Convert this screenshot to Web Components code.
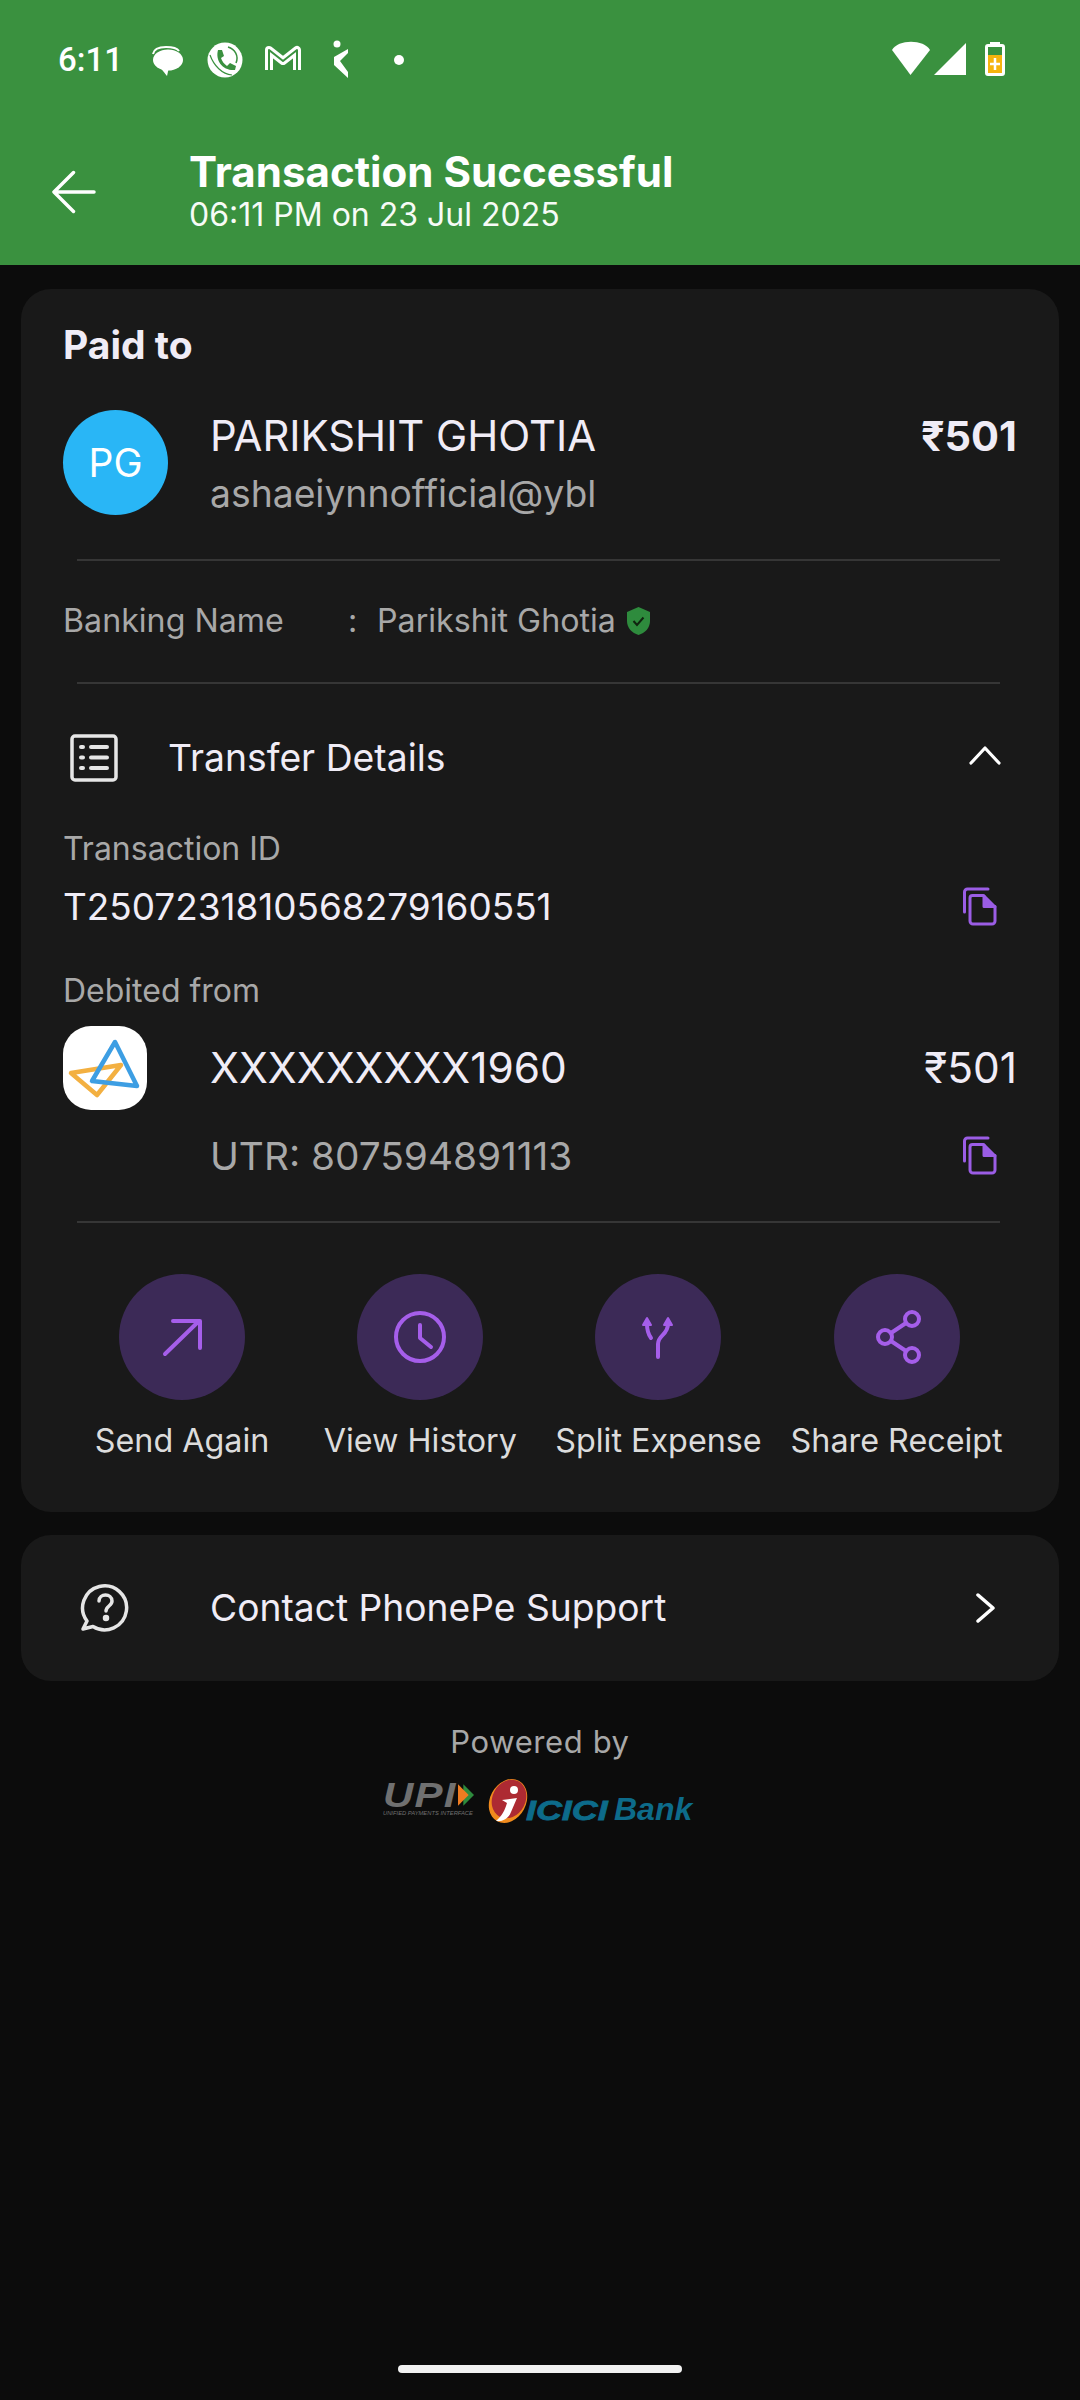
<!DOCTYPE html>
<html>
<head>
<meta charset="utf-8">
<title>Transaction Successful</title>
<style>
    html, body { margin: 0; padding: 0; background: #0c0c0c; }
    body { font-family: "Inter", "Liberation Sans", sans-serif; color: #f0ecf6; }
</style>
</head>
<body>
<txn-page>
    <txn-header slot="header" title="Transaction Successful" subtitle="06:11 PM on 23 Jul 2025"></txn-header>

    <txn-card>
        <paid-to name="PARIKSHIT GHOTIA" vpa="ashaeiynnofficial@ybl" amount="₹501" initials="PG" banking="Parikshit Ghotia"></paid-to>
        <transfer-details txn="T2507231810568279160551" account="XXXXXXXXX1960" amount="₹501" utr="UTR: 807594891113"></transfer-details>
        <action-row></action-row>
    </txn-card>

    <support-link>Contact PhonePe Support</support-link>
    <powered-by></powered-by>
</txn-page>

<script>
const copyIcon = `<svg width="36" height="40" viewBox="0 0 36 40" fill="none" stroke="#9b5de5" stroke-width="3" stroke-linejoin="round" stroke-linecap="round">
    <path d="M2.5 25V5a3 3 0 0 1 3-3H26"/>
    <path d="M10.5 8.5H21.5L33 20V34a3 3 0 0 1-3 3H11a3 3 0 0 1-3-3V11a2.500 2.500 0 0 1 2.500-2.500Z"/>
    <path d="M22 9V19.500H33" fill="#9b5de5"/>
</svg>`;

const actionIcons = {
    send: `<path d="M13 47L47 14M21 14H48V41"/>`,
    history: `<circle cx="30" cy="30" r="24"/><path d="M30 18V31L41 40"/>`,
    split: `<path d="M30 50V37C30 28 40 28 40 17M23 31C20 27 19 24 19 17"/>
            <path d="M19 11L15 18H23ZM40 11L36 18H44Z" fill="#a55eea" stroke-width="2"/>`,
    share: `<circle cx="45" cy="12" r="7"/><circle cx="18" cy="30" r="7"/><circle cx="45" cy="48" r="7"/>
            <path d="M39 16L24 26M24 34L39 44"/>`
};

class TxnPage extends HTMLElement {
    connectedCallback() {
        const root = this.attachShadow({ mode: "open" });
        root.innerHTML = `
            <style>
                :host { display: flex; flex-direction: column; height: 2400px; background: #0c0c0c; overflow: hidden; }
                .body { display: flex; flex-direction: column; flex: 1; padding: 24px 21px 0; }
                .home { width: 284px; height: 8px; border-radius: 4px; background: #f2f2f2; margin: 0 auto 27px; flex: none; }
            </style>
            <slot name="header"></slot>
            <div class="body"><slot></slot></div>
            <div class="home"></div>`;
    }
}

class TxnHeader extends HTMLElement {
    connectedCallback() {
        const root = this.attachShadow({ mode: "open" });
        root.innerHTML = `
            <style>
                :host { display: block; height: 265px; background: #3a913f; color: #fff; }
                .status { display: flex; align-items: center; height: 120px; padding: 0 50px 0 58px; }
                .time { width: 72px; font: 500 33px/40px "Roboto", sans-serif; letter-spacing: 0; }
                .status .right { margin-left: auto; }
                svg { display: block; flex: none; }
                .bar { display: flex; align-items: flex-start; height: 145px; }
                .back { margin: 50px 0 0 52px; }
                .titles { margin-left: 93px; padding-top: 28px; }
                .title { font: 700 42.100px/48px "Inter", sans-serif; }
                .sub { font: 400 32px/40px "Inter", sans-serif; margin-top: -1px; color: #f6fbf6; }
            </style>
            <div class="status">
                <div class="time">6:11</div>
                <svg width="300" height="80" viewBox="0 0 300 80">
                    <ellipse cx="38" cy="40" rx="15" ry="10.500" fill="#fff"/>
                    <path d="M29 46 L37 56 L39 47Z" fill="#fff"/>
                    <path d="M23 34 C24 28 30 27 36 27 C42 27 47 28 49 31" fill="none" stroke="#fff" stroke-width="2"/>
                    <circle cx="95" cy="40" r="17.500" fill="#fff"/>
                    <path d="M88 30 C85 41 93 51 105 50 L106 46 L100 43 L97 46 C94 44 92 41 91 38 L94 36 L92 30Z" fill="#3a913f"/>
                    <path d="M98 27 C105 29 109 36 106 43" fill="none" stroke="#3a913f" stroke-width="1.500"/>
                    <path d="M80 35 C84 46 92 54 102 55" fill="none" stroke="#3a913f" stroke-width="1.200"/>
                    <path d="M139 50V30L153 41L167 30V50" fill="none" stroke="#fff" stroke-width="8" stroke-linejoin="round"/>
                    <path d="M139 50V30L153 41L167 30V50" fill="none" stroke="#3a913f" stroke-width="2" stroke-linejoin="round"/>
                    <circle cx="207" cy="24" r="3.500" fill="#fff"/>
                    <path d="M218 29 L218 33 L210 41 L218 52 L218 58 L204 45 L204 37Z" fill="#fff"/>
                    <circle cx="269" cy="40" r="5" fill="#fff"/>
                </svg>
                <svg class="right" width="160" height="80" viewBox="0 0 160 80">
                    <path d="M22 30 C28 19 54 19 60 30 L40.500 55Z" fill="#fff"/>
                    <path d="M64 55 L96 23 V55Z" fill="#fff"/>
                    <path d="M120 22 V24 H118 Q115 24 115 27 V53 Q115 56 118 56 H132 Q135 56 135 53 V27 Q135 24 132 24 H130 V22Z" fill="#fff"/>
                    <rect x="118" y="27" width="14" height="8" fill="#3a913f"/>
                    <rect x="118" y="35" width="14" height="18" fill="#f6b40e"/>
                    <path d="M125 38 V50 M120 44 H130" stroke="#fff" stroke-width="2.500"/>
                </svg>
            </div>
            <div class="bar">
                <svg class="back" width="44" height="44" viewBox="0 0 45 44" fill="none" stroke="#fff" stroke-width="3.500" stroke-linecap="round" stroke-linejoin="round">
                    <path d="M43 22H3M22 2L2 22L22 42"/>
                </svg>
                <div class="titles">
                    <div class="title">${this.getAttribute("title")}</div>
                    <div class="sub">${this.getAttribute("subtitle")}</div>
                </div>
            </div>`;
    }
}

class TxnCard extends HTMLElement {
    connectedCallback() {
        this.attachShadow({ mode: "open" }).innerHTML = `
            <style>
                :host { display: block; background: #191919; border-radius: 30px; padding: 34px 42px 49px; }
            </style>
            <slot></slot>`;
    }
}

class PaidTo extends HTMLElement {
    connectedCallback() {
        this.attachShadow({ mode: "open" }).innerHTML = `
            <style>
                :host { display: block; }
                .head { font: 700 39px/44px "Inter", sans-serif; color: #f0ecf6; }
                .row { display: flex; align-items: flex-start; margin-top: 43px; }
                .avatar { width: 105px; height: 105px; border-radius: 50%; background: #29b6f6; color: #fff; display: flex; align-items: center; justify-content: center; font: 400 39px/1 "Inter", sans-serif; flex: none; }
                .who { margin: 1px 0 0 42px; flex: 1; }
                .name { font: 400 41.800px/50px "Inter", sans-serif; color: #f0ecf6; }
                .vpa { font: 400 37.300px/50px "Inter", sans-serif; color: #a8a8a8; margin-top: 8px; }
                .amt { font: 700 41.500px/50px "Inter", sans-serif; color: #f0ecf6; margin-top: 1px; }
                hr { border: 0; height: 2px; background: #363636; margin: 39px 17px 0 14px; }
                hr.first { margin-top: 40px; }
                .bank { display: flex; align-items: center; font: 400 32.200px/44px "Inter", sans-serif; color: #a8a8a8; margin-top: 38px; }
                .bank .lab { width: 285px; }
                .bank .col { width: 29px; }
                .bank svg { margin-left: 10px; display: block; }
            </style>
            <div class="head">Paid to</div>
            <div class="row">
                <div class="avatar">${this.getAttribute("initials")}</div>
                <div class="who">
                    <div class="name">${this.getAttribute("name")}</div>
                    <div class="vpa">${this.getAttribute("vpa")}</div>
                </div>
                <div class="amt">${this.getAttribute("amount")}</div>
            </div>
            <hr class="first">
            <div class="bank">
                <span class="lab">Banking Name</span><span class="col">:</span><span>${this.getAttribute("banking")}</span>
                <svg width="25" height="30" viewBox="0 0 25 30">
                    <path d="M12.500 1L24 6V15C24 22 19 27 12.500 29C6 27 1 22 1 15V6Z" fill="#2e8b3d"/>
                    <path d="M7.500 15L11 19L17.500 11.500" fill="none" stroke="#10240f" stroke-width="2"/>
                </svg>
            </div>
            <hr>`;
    }
}

class TransferDetails extends HTMLElement {
    connectedCallback() {
        this.attachShadow({ mode: "open" }).innerHTML = `
            <style>
                :host { display: block; }
                svg { display: block; flex: none; }
                .top { display: flex; align-items: center; height: 50px; margin-top: 49px; }
                .top .list { margin-left: 7px; }
                .top .t { margin-left: 50px; flex: 1; font: 400 37.300px/50px "Inter", sans-serif; color: #f0ecf6; }
                .top .chev { margin: 0 16px 6px 0; }
                .lab { font: 400 32px/40px "Inter", sans-serif; color: #a8a8a8; }
                .val { display: flex; align-items: center; justify-content: space-between; padding-right: 19px; }
                .id { font: 400 36.900px/44px "Inter", sans-serif; color: #f0ecf6; }
                .bank { display: flex; align-items: flex-start; margin-top: 15px; }
                .logo { width: 84px; height: 84px; background: #fff; border-radius: 28px; flex: none; }
                .rows { flex: 1; margin-left: 63px; padding-top: 17px; }
                .line { display: flex; align-items: center; justify-content: space-between; height: 50px; }
                .acct { font: 400 42.400px/50px "Inter", sans-serif; color: #f0ecf6; }
                .utr { font: 400 38.800px/50px "Inter", sans-serif; color: #a8a8a8; }
                .line.second { margin-top: 38px; padding-right: 19px; }
                hr { border: 0; height: 2px; background: #363636; margin: 40px 17px 0 14px; }
            </style>
            <div class="top">
                <svg class="list" width="48" height="48" viewBox="0 0 48 48" fill="none" stroke="#e6e6e6" stroke-linecap="round">
                    <rect x="2" y="2" width="44" height="44" rx="3" stroke-width="3.500"/>
                    <path d="M11 13H13M11 23.500H13M11 34H13" stroke-width="4"/>
                    <path d="M21 13H37M21 23.500H37M21 34H37" stroke-width="4"/>
                </svg>
                <div class="t">Transfer Details</div>
                <svg class="chev" width="32" height="20" viewBox="0 0 32 20" fill="none" stroke="#fff" stroke-width="3.200" stroke-linecap="round" stroke-linejoin="round"><path d="M2 18L16 3L30 18"/></svg>
            </div>
            <div class="lab" style="margin-top:46px">Transaction ID</div>
            <div class="val" style="margin-top:16px"><span class="id">${this.getAttribute("txn")}</span>${copyIcon}</div>
            <div class="lab" style="margin-top:42px">Debited from</div>
            <div class="bank">
                <svg class="logo" viewBox="0 0 84 84" fill="none" stroke-linejoin="round" stroke-width="4.500">
                    <path d="M8 47L58 39L34 69Z" stroke="#f3b041"/>
                    <path d="M52 16L29 55L74 60Z" stroke="#3d9ee3"/>
                </svg>
                <div class="rows">
                    <div class="line"><span class="acct">${this.getAttribute("account")}</span><span class="acct">${this.getAttribute("amount")}</span></div>
                    <div class="line second"><span class="utr">${this.getAttribute("utr")}</span>${copyIcon}</div>
                </div>
            </div>
            <hr>`;
    }
}

class ActionRow extends HTMLElement {
    connectedCallback() {
        this.attachShadow({ mode: "open" }).innerHTML = `
            <style>
                :host { display: grid; grid-template-columns: repeat(4, 238.200px); margin-top: 51px; margin-right: -2px; }
            </style>
            <action-item icon="send" label="Send Again"></action-item>
            <action-item icon="history" label="View History"></action-item>
            <action-item icon="split" label="Split Expense"></action-item>
            <action-item icon="share" label="Share Receipt"></action-item>`;
    }
}

class ActionItem extends HTMLElement {
    connectedCallback() {
        this.attachShadow({ mode: "open" }).innerHTML = `
            <style>
                :host { display: flex; flex-direction: column; align-items: center; }
                .disc { width: 126px; height: 126px; border-radius: 50%; background: #3c2a57; display: flex; align-items: center; justify-content: center; }
                svg { display: block; fill: none; stroke: #a55eea; stroke-width: 4; stroke-linecap: round; stroke-linejoin: round; }
                .lab { margin-top: 19px; font: 400 32.300px/44px "Inter", sans-serif; color: #dcdcdc; white-space: nowrap; }
            </style>
            <div class="disc"><svg width="60" height="60" viewBox="0 0 60 60">${actionIcons[this.getAttribute("icon")]}</svg></div>
            <div class="lab">${this.getAttribute("label")}</div>`;
    }
}

class SupportLink extends HTMLElement {
    connectedCallback() {
        this.attachShadow({ mode: "open" }).innerHTML = `
            <style>
                :host { display: flex; align-items: center; height: 146px; margin-top: 23px; background: #191919; border-radius: 30px; color: #f0ecf6; font: 400 37.200px/50px "Inter", sans-serif; }
                svg { display: block; flex: none; }
                .ask { margin: 0 0 2px 59px; }
                .text { margin-left: 80px; flex: 1; }
                .go { margin-right: 63px; }
            </style>
            <svg class="ask" width="50" height="50" viewBox="0 0 50 50" fill="none" stroke="#e6e6e6" stroke-width="3.500" stroke-linecap="round" stroke-linejoin="round">
                <path d="M7 39A22 22 0 1 1 13 44.500L3 47Z"/>
                <path d="M19 19C19 11 32 11 32 19C32 24 26 24 26 29" stroke-width="3.500"/>
                <circle cx="26" cy="36" r="1.500" fill="#e6e6e6"/>
            </svg>
            <span class="text"><slot></slot></span>
            <svg class="go" width="21" height="30" viewBox="0 0 21 30" fill="none" stroke="#fff" stroke-width="3.500" stroke-linecap="round" stroke-linejoin="round"><path d="M3 2L18 15L3 28"/></svg>`;
    }
}

class PoweredBy extends HTMLElement {
    connectedCallback() {
        this.attachShadow({ mode: "open" }).innerHTML = `
            <style>
                :host { display: block; margin-top: 41px; text-align: center; }
                .lab { font: 400 31px/40px "Inter", sans-serif; color: #a8a8a8; letter-spacing: 0.6px; }
                .logos { display: flex; align-items: flex-start; height: 50px; margin-top: 13px; padding-left: 362px; text-align: left; }
                .upi { position: relative; width: 104px; height: 50px; flex: none; }
                .upi b { display: block; font: italic 900 35px/35px "Liberation Sans", sans-serif; color: #707070; letter-spacing: 1px; margin-top: 2px; transform: scaleX(1.200); transform-origin: left; }
                .upi small { display: block; font: italic 400 5.800px/8px "Liberation Sans", sans-serif; color: #707070; white-space: nowrap; margin-top: -3px; }
                .upi svg { position: absolute; left: 75px; top: 8px; }
                .icici { display: flex; align-items: flex-start; margin-left: 1px; }
                .icici svg { margin-top: 3px; flex: none; }
                .word { font: italic 700 32px/36px "Liberation Sans", sans-serif; color: #0d6b8a; margin: 16px 0 0 -2px; white-space: nowrap; }
                .word i { display: inline-block; width: 82px; font-size: 28px; font-weight: 900; transform: scaleX(1.280); transform-origin: left; -webkit-text-stroke: 0.8px #0d6b8a; }
                .word span { margin-left: 6px; }
            </style>
            <div class="lab">Powered by</div>
            <div class="logos">
                <div class="upi">
                    <b>UPI</b>
                    <small>UNIFIED PAYMENTS INTERFACE</small>
                    <svg width="16" height="24" viewBox="0 0 18 24"><path d="M6 0L18 12L6 24Z" fill="#2e8b3d"/><path d="M0 0L12 12L0 24Z" fill="#ef7c21"/></svg>
                </div>
                <div class="icici">
                    <svg width="40" height="46" viewBox="0 0 40 46">
                        <ellipse cx="20" cy="23" rx="18" ry="23" transform="rotate(28 20 23)" fill="#f08a1d"/>
                        <ellipse cx="21" cy="21" rx="16.500" ry="20" transform="rotate(28 21 21)" fill="#ad2a32"/>
                        <circle cx="26" cy="12" r="4" fill="#fff"/>
                        <path d="M14 22L29 20L23 34C21 40 15 44 8 43C14 38 17 32 19 25Z" fill="#fff"/>
                    </svg>
                    <div class="word"><i>ICICI</i><span>Bank</span></div>
                </div>
            </div>`;
    }
}

customElements.define("txn-page", TxnPage);
customElements.define("txn-header", TxnHeader);
customElements.define("txn-card", TxnCard);
customElements.define("paid-to", PaidTo);
customElements.define("transfer-details", TransferDetails);
customElements.define("action-item", ActionItem);
customElements.define("action-row", ActionRow);
customElements.define("support-link", SupportLink);
customElements.define("powered-by", PoweredBy);
</script>
</body>
</html>
